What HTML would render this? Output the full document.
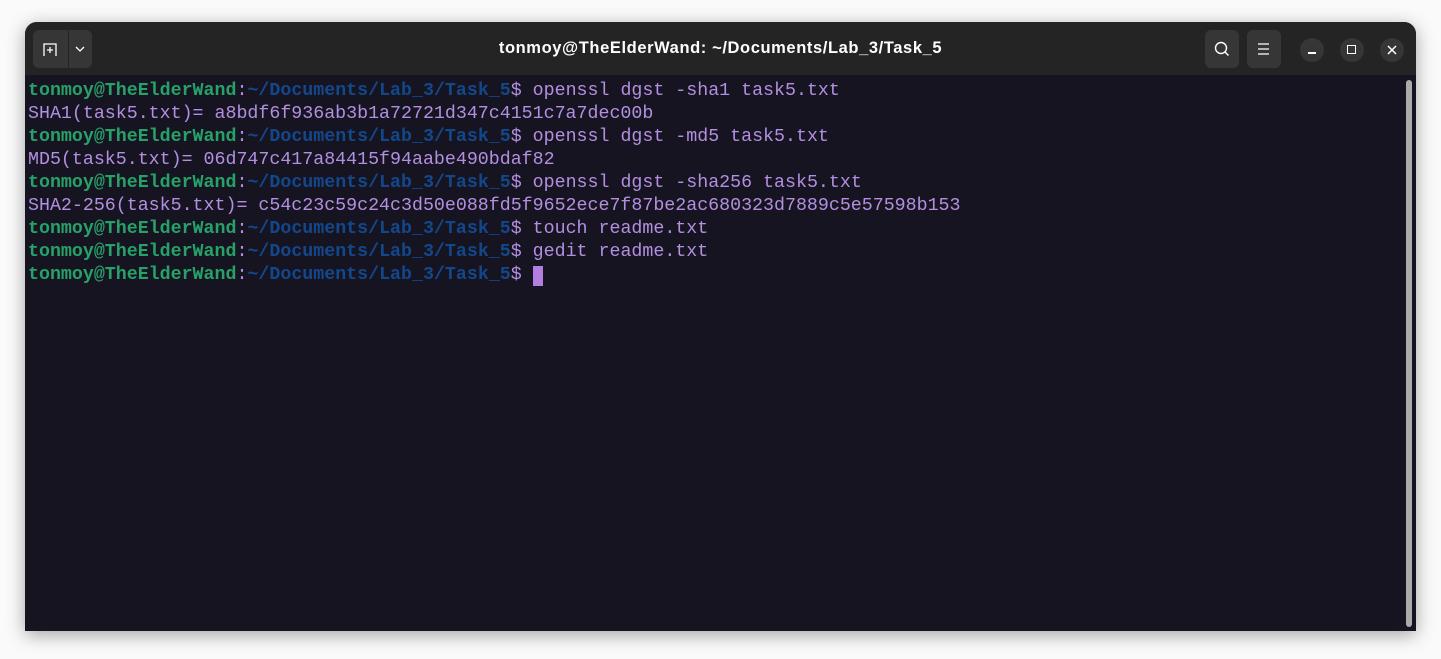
<!DOCTYPE html>
<html><head><style>
body{margin:0;width:1441px;height:659px;background:#fafafa;position:relative;overflow:hidden;font-family:"Liberation Sans",sans-serif}
.win{position:absolute;left:25px;top:22px;width:1391px;height:609px;background:#171421;border-radius:12px 12px 0 0;box-shadow:0 4px 18px rgba(0,0,0,.35);overflow:hidden}
.hdr{position:absolute;left:0;top:0;width:100%;height:53px;background:#242424}
.title{position:absolute;left:0;right:0;top:17px;text-align:center;color:#fff;font-weight:bold;font-size:16.5px;letter-spacing:0.6px}
.btn{position:absolute;background:#363636;border-radius:6px}
.circ{position:absolute;top:16px;width:24px;height:24px;border-radius:50%;background:#363636}
.term{position:absolute;left:3px;top:58px;font-family:"Liberation Mono",monospace;font-size:18.3px;line-height:23px;color:#b28fe0;white-space:pre}
.g{color:#26a269;font-weight:bold}.b{color:#12488b;font-weight:bold}
.cur{display:inline-block;width:10px;height:23px;vertical-align:top;background:linear-gradient(#171421 0,#171421 2px,#b27fe0 2px,#b27fe0 22px,#171421 22px)}
.sb{position:absolute;left:1381px;top:58px;width:6px;height:547px;background:#ababab;border-radius:3px}
</style></head><body>
<div class="win">
<div class="hdr">
<div class="btn" style="left:8px;top:8px;width:59px;height:38px"></div>
<div style="position:absolute;left:43px;top:8px;width:1px;height:38px;background:#242424"></div>
<svg style="position:absolute;left:17px;top:19px" width="16" height="16" viewBox="0 0 16 16" fill="none" stroke="#fff" stroke-width="1.3"><path d="M2 15V3h12v12M8 6v6M5 9h6"/></svg>
<svg style="position:absolute;left:49px;top:22px" width="12" height="10" viewBox="0 0 12 10" fill="none" stroke="#fff" stroke-width="1.3"><path d="M2 3l4 4 4-4"/></svg>
<div class="title">tonmoy@TheElderWand: ~/Documents/Lab_3/Task_5</div>
<div class="btn" style="left:1180px;top:8px;width:34px;height:38px"></div>
<svg style="position:absolute;left:1188px;top:18px" width="18" height="18" viewBox="0 0 18 18" fill="none" stroke="#fff" stroke-width="1.4"><circle cx="8" cy="8" r="5.5"/><path d="M12 12l3.5 3.5"/></svg>
<div class="btn" style="left:1222px;top:8px;width:34px;height:38px"></div>
<svg style="position:absolute;left:1232px;top:20px" width="14" height="14" viewBox="0 0 14 14" stroke="#fff" stroke-width="1.3"><path d="M1 2h11M1 7h11M1 12h11"/></svg>
<div class="circ" style="left:1275px"><div style="position:absolute;left:8px;top:14px;width:8px;height:1.5px;background:#fff"></div></div>
<div class="circ" style="left:1315px"><div style="position:absolute;left:7px;top:7px;width:7px;height:7px;border:1.4px solid #fff"></div></div>
<div class="circ" style="left:1355px"><svg style="position:absolute;left:7px;top:7px" width="10" height="10" viewBox="0 0 10 10" stroke="#fff" stroke-width="1.5"><path d="M1 1l8 8M9 1l-8 8"/></svg></div>
</div>
<div class="term"><span class="g">tonmoy@TheElderWand</span>:<span class="b">~/Documents/Lab_3/Task_5</span>$ openssl dgst -sha1 task5.txt
SHA1(task5.txt)= a8bdf6f936ab3b1a72721d347c4151c7a7dec00b
<span class="g">tonmoy@TheElderWand</span>:<span class="b">~/Documents/Lab_3/Task_5</span>$ openssl dgst -md5 task5.txt
MD5(task5.txt)= 06d747c417a84415f94aabe490bdaf82
<span class="g">tonmoy@TheElderWand</span>:<span class="b">~/Documents/Lab_3/Task_5</span>$ openssl dgst -sha256 task5.txt
SHA2-256(task5.txt)= c54c23c59c24c3d50e088fd5f9652ece7f87be2ac680323d7889c5e57598b153
<span class="g">tonmoy@TheElderWand</span>:<span class="b">~/Documents/Lab_3/Task_5</span>$ touch readme.txt
<span class="g">tonmoy@TheElderWand</span>:<span class="b">~/Documents/Lab_3/Task_5</span>$ gedit readme.txt
<span class="g">tonmoy@TheElderWand</span>:<span class="b">~/Documents/Lab_3/Task_5</span>$ <span class="cur"></span></div>
<div class="sb"></div>
</div>
</body></html>
